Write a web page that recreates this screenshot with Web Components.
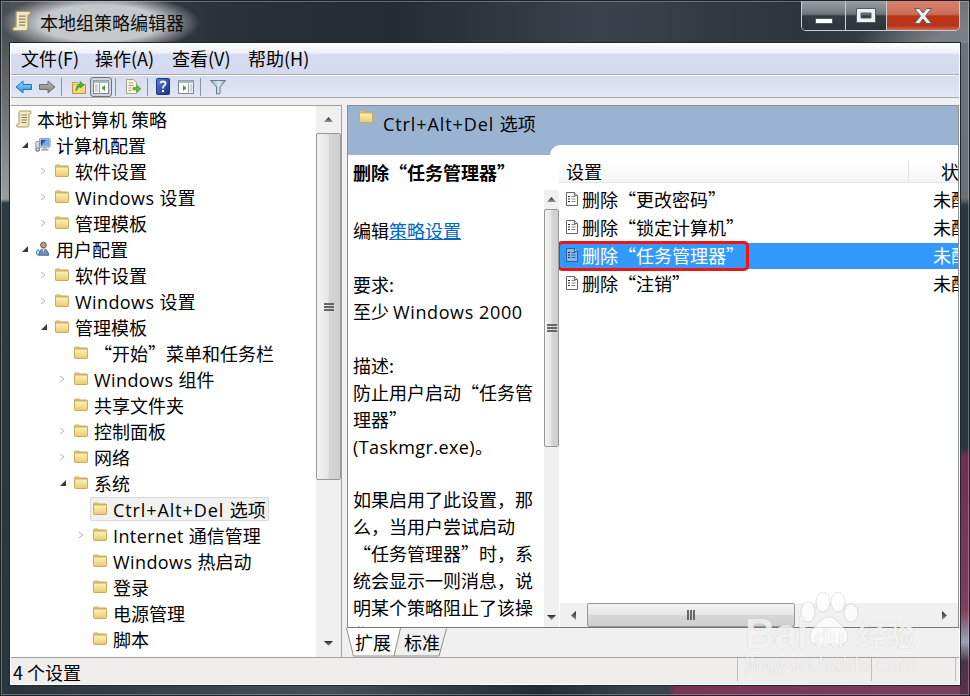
<!DOCTYPE html>
<html lang="zh-CN">
<head>
<meta charset="utf-8">
<title>本地组策略编辑器</title>
<style>
html, body { margin: 0; padding: 0; }
body { font: 18px/26px "Noto Sans CJK SC", "Noto Sans", sans-serif; color: #000; width: 970px; height: 696px; overflow: hidden; }
/* latin runs are wider in the reference than the CJK font's own latin */
.l { font-family: "Open Sans", "Noto Sans", sans-serif; line-height: 1; letter-spacing: .4px; }
.c { letter-spacing: .9px; }
.n { letter-spacing: .6px; }
</style>
</head>
<body>
<win-frame>
  <span slot="title">本地组策略编辑器</span>
  <menu-bar slot="menu"></menu-bar>
  <tool-bar slot="tools"></tool-bar>
  <tree-pane slot="tree">
    <tree-row level="0" icon="scroll">本地计算机 策略</tree-row>
    <tree-row level="1" arrow="open" icon="computer">计算机配置</tree-row>
    <tree-row level="2" arrow="closed" icon="folder">软件设置</tree-row>
    <tree-row level="2" arrow="closed" icon="folder"><span class="l">Windows </span>设置</tree-row>
    <tree-row level="2" arrow="closed" icon="folder">管理模板</tree-row>
    <tree-row level="1" arrow="open" icon="user">用户配置</tree-row>
    <tree-row level="2" arrow="closed" icon="folder">软件设置</tree-row>
    <tree-row level="2" arrow="closed" icon="folder"><span class="l">Windows </span>设置</tree-row>
    <tree-row level="2" arrow="open" icon="folder">管理模板</tree-row>
    <tree-row level="3" icon="folder">“开始”菜单和任务栏</tree-row>
    <tree-row level="3" arrow="closed" icon="folder"><span class="l">Windows </span>组件</tree-row>
    <tree-row level="3" icon="folder">共享文件夹</tree-row>
    <tree-row level="3" arrow="closed" icon="folder">控制面板</tree-row>
    <tree-row level="3" arrow="closed" icon="folder">网络</tree-row>
    <tree-row level="3" arrow="open" icon="folder">系统</tree-row>
    <tree-row level="4" icon="folder" selected><span class="l c">Ctrl+Alt+Del </span>选项</tree-row>
    <tree-row level="4" arrow="closed" icon="folder"><span class="l">Internet </span>通信管理</tree-row>
    <tree-row level="4" icon="folder"><span class="l">Windows </span>热启动</tree-row>
    <tree-row level="4" icon="folder">登录</tree-row>
    <tree-row level="4" icon="folder">电源管理</tree-row>
    <tree-row level="4" icon="folder">脚本</tree-row>
  </tree-pane>
  <detail-pane slot="detail">
    <span slot="heading"><span class="l c">Ctrl+Alt+Del </span>选项</span>
    <desc-pane slot="desc">
      <b slot="title">删除“任务管理器”</b>
      编辑<a href="#">策略设置</a><br><br>
      要求:<br>
      至少 <span class="l n">Windows 2000</span><br><br>
      描述:<br>
      防止用户启动“任务管<br>
      理器”<br>
      <span class="l">(Taskmgr.exe)</span>。<br><br>
      如果启用了此设置，那<br>
      么，当用户尝试启动<br>
      “任务管理器”时，系<br>
      统会显示一则消息，说<br>
      明某个策略阻止了该操<br>
      作。
    </desc-pane>
    <list-pane slot="list">
      <policy-row state="未配置">删除“更改密码”</policy-row>
      <policy-row state="未配置">删除“锁定计算机”</policy-row>
      <policy-row state="未配置" selected>删除“任务管理器”</policy-row>
      <policy-row state="未配置">删除“注销”</policy-row>
    </list-pane>
    <tab-strip slot="tabs"></tab-strip>
  </detail-pane>
  <status-bar slot="status">4 个设置</status-bar>
  <bd-mark slot="mark"></bd-mark>
</win-frame>

<script>
// folder has its own gradient, ids are per shadow root so repeating them is fine
const ICONS = {
  folder: `<svg width="16" height="16" viewBox="0 0 16 16"><defs><linearGradient id="f" x1="0" y1="0" x2="0" y2="1"><stop offset="0" stop-color="#fdf3bd"/><stop offset="1" stop-color="#ecca6c"/></linearGradient></defs>
    <path d="M1.500 4V2.800q0-.8.8-.8h3.400q.6 0 .9.6l.3.4h6.800q.8 0 .8.8V4z" fill="#f2d98c" stroke="#c9a95a"/>
    <rect x="1.500" y="4" width="13" height="9.500" rx=".8" fill="url(#f)" stroke="#cbaa5c"/></svg>`,
  scroll: `<svg width="16" height="20" viewBox="0 0 16 20"><path d="M4 2h10q1.500 0 1 2l-1 1h-1v10q0 3-2 3H2q-2 0-1.500-2l1-1h1.500V4q0-2 1-2z" fill="#f1e7c2" stroke="#a9996c"/><path d="M5.500 6h5.500M5.500 8.500h5.500M5.500 11h5.500M5.500 13.500h5" stroke="#8b8266"/></svg>`,
  computer: `<svg width="18" height="18" viewBox="0 0 18 18"><rect x="5" y="1.500" width="12" height="10" rx="1" fill="#cfd4da" stroke="#8b939c"/><rect x="6.500" y="3" width="9" height="7" fill="#1f53c4"/><path d="M6.500 10l6-7h3v7z" fill="#76a9ec"/><path d="M9 11.500h4v2H9z" fill="#b0b6bc"/><path d="M7 14.500h8" stroke="#8b939c" stroke-width="1.500"/><rect x="1" y="5" width="4" height="11" rx="1" fill="#d8dcdf" stroke="#858c93"/><circle cx="3" cy="14" r="1.800" fill="none" stroke="#3f7fbf"/></svg>`,
  user: `<svg width="18" height="18" viewBox="0 0 18 18"><circle cx="9.500" cy="4.500" r="3.200" fill="#c89a78" stroke="#5a4638"/><path d="M4.500 16q0-7 5-7t6 7z" fill="#6d8fb5" stroke="#415d7b"/><path d="M8.500 9l1 4 1-4z" fill="#eee"/><circle cx="3.500" cy="13" r="2" fill="none" stroke="#3f7fbf" stroke-width="1.200"/><path d="M3.500 9v2M3.500 15v2" stroke="#3f7fbf"/></svg>`,
  policy: `<svg width="14" height="16" viewBox="0 0 14 16"><path d="M1.500 1.500h8l3 3v10h-11z" fill="var(--page,#fff)" stroke="var(--edge,#666)"/><path d="M9.500 1.500v3h3" fill="#ddd" stroke="var(--edge,#666)"/><path d="M3 5.500h2M3 8h2M3 10.500h2" stroke="#222"/><path d="M6.500 5.500h4M6.500 8h4M6.500 10.500h4" stroke="var(--ln,#888)"/></svg>`,
  back: `<svg width="18" height="16" viewBox="0 0 18 16"><defs><linearGradient id="b" x1="0" y1="0" x2="0" y2="1"><stop offset="0" stop-color="#a8defa"/><stop offset="1" stop-color="#1a8adf"/></linearGradient></defs><path d="M1 8l7-6v3.500h8.500v5H8V14z" fill="url(#b)" stroke="#1f74b8"/></svg>`,
  forward: `<svg width="18" height="16" viewBox="0 0 18 16"><defs><linearGradient id="g" x1="0" y1="0" x2="0" y2="1"><stop offset="0" stop-color="#bdbdbd"/><stop offset="1" stop-color="#7c7c7c"/></linearGradient></defs><path d="M17 8l-7-6v3.500H1.500v5H10V14z" fill="url(#g)" stroke="#707070"/></svg>`,
  up: `<svg width="16" height="16" viewBox="0 0 16 16"><path d="M1.500 5.500h13v9h-13z" fill="#f4d67c" stroke="#b9974a"/><path d="M1.500 5.500v-2h5l1 2" fill="#f8e6a5" stroke="#b9974a"/><path d="M5 12q0-6 4-7V2.500L13 6l-4 3V7q-2 1-4 5z" fill="#4db233" stroke="#2f8a1e" stroke-width=".6"/></svg>`,
  pane: `<svg width="16" height="14" viewBox="0 0 16 14"><rect x=".5" y=".5" width="15" height="13" fill="#fff" stroke="#7d868c"/><path d="M.5.500h15v2.500H.5z" fill="#a9b8c4"/><path d="M2 5h3M2 7h3M2 9h3M2 11h3" stroke="#9aa8b2"/><path d="M6.500 3v10.500" stroke="#9aa8b2"/><path d="M12 5v6L8.500 8z" fill="#3aa82c"/></svg>`,
  exportl: `<svg width="18" height="17" viewBox="0 0 18 17"><path d="M2.500 1.500h7l3 3v11h-10z" fill="#fdf8e6" stroke="#a6a18e"/><path d="M4.500 5h5M4.500 7.500h5M4.500 10h3M4.500 12.500h3" stroke="#a69a70"/><path d="M9 9.500h4V7l4 3.800-4 3.700V12H9z" fill="#5cc23e" stroke="#3a9a26" stroke-width=".6"/></svg>`,
  help: `<svg width="14" height="17" viewBox="0 0 14 17"><defs><linearGradient id="h" x1="0" y1="0" x2="1" y2="1"><stop offset="0" stop-color="#5a7fd6"/><stop offset="1" stop-color="#152f8c"/></linearGradient></defs><rect x=".5" y=".5" width="13" height="16" rx="1" fill="url(#h)" stroke="#1d3480"/><path d="M4.500 5.500q0-2 2.500-2t2.500 2q0 1.500-1.500 2.200-1 .6-1 2v.8" fill="none" stroke="#fff" stroke-width="1.800"/><rect x="6" y="12" width="2" height="2" fill="#fff"/></svg>`,
  view: `<svg width="16" height="14" viewBox="0 0 16 14"><rect x=".5" y=".5" width="15" height="13" fill="#fff" stroke="#7d868c"/><path d="M.5.500h15v2.500H.5z" fill="#a9b8c4"/><path d="M10.500 3v10.500" stroke="#9aa8b2"/><path d="M12 5h2.500M12 7h2.500M12 9h2.500M12 11h2.500" stroke="#9aa8b2"/><path d="M5 5v6l3.500-3z" fill="#3aa82c"/></svg>`,
  filter: `<svg width="16" height="16" viewBox="0 0 16 16"><defs><linearGradient id="t" x1="0" y1="0" x2="1" y2="0"><stop offset="0" stop-color="#8fb0c4"/><stop offset=".6" stop-color="#dfe9ef"/><stop offset="1" stop-color="#7e99ac"/></linearGradient></defs><path d="M.5 1.500h15L10 8v6.500L6.500 15V8z" fill="url(#t)" stroke="#5f7b8e"/></svg>`
};

class WinFrame extends HTMLElement {
  connectedCallback() {
    this.attachShadow({ mode: 'open' }).innerHTML = `
      <style>
        :host {
          display: flex; flex-direction: column; position: relative;
          width: 970px; height: 696px; box-sizing: border-box; padding: 0 10px 11px;
          background:
            radial-gradient(ellipse 100px 30px at 100px 23px, rgba(208,211,214,.92) 0 60%, rgba(208,211,214,0) 100%) 0 0/400px 43px no-repeat,
            radial-gradient(ellipse 120px 45px at 975px 45px, #7b8086 0 35%, rgba(123,128,134,0) 100%) 0 0/100% 43px no-repeat,
            linear-gradient(180deg, #6d7379 30px, #6a7076 198px, #283640 206px, #283640 448px, #6e2f4c 456px, #7d3f5c 610px, #9aa2bb 642px, #51304a 662px, #5c2f48 696px) 100% 0/10px 100% no-repeat,
            linear-gradient(180deg, #4a4f54 30px, #9a9da0 199px, #2d3a44 203px, #2a363f 696px) 0 0/10px 100% no-repeat,
            linear-gradient(90deg, #2a333b 0, #454f56 330px, #222c34 540px, #3a444b 640px, #3a444b 668px, #7a3452 676px, #7d3f5c 960px) 0 100%/100% 11px no-repeat,
            linear-gradient(90deg, #4e5459 0, #2a2f38 230px, #252c35 400px, #3a424d 600px, #2c343d 800px, #3e464d 960px);
          box-shadow: inset 0 0 0 1px #1d2329, inset 0 0 0 2px rgba(255,255,255,.28);
          overflow: hidden;
        }
        .title { height: 43px; flex: none; display: flex; align-items: flex-start; position: relative; }
        .title > svg { margin: 9px 0 0 2px; }
        .title .txt { margin: 9px 0 0 8px; font-size: 18px; line-height: 26px; color: #0c0c0c; }
        .caps { position: absolute; top: 1px; right: 0; display: flex; height: 29px; width: 157px; border: 1px solid #c9ced2; border-top: 0; border-radius: 0 0 5px 5px; overflow: hidden; box-sizing: content-box; }
        .caps div { display: flex; align-items: center; justify-content: center; border-right: 1px solid #c9ced2; background: linear-gradient(#9ba0a4 0, #70767b 45%, #343b42 52%, #2c343b 100%); }
        .caps .min { width: 43px; } .caps .min svg { margin-top: 10px; }
        .caps .max { width: 40px; }
        .caps .close { flex: 1; border: 0; background: linear-gradient(#d9806f 0, #cb6f5c 45%, #bc3518 52%, #b9341a 85%, #cf6a50 100%); }
        .client { flex: 1; display: flex; flex-direction: column; min-height: 0; border: 1px solid #fff; outline: 1px solid #20262b; background: #f0f0f0; }
        .main { flex: 1; display: flex; gap: 5px; padding-top: 7px; min-height: 0; }
      </style>
      <div class="title">
        ${ICONS.scroll.replace('width="16" height="20"', 'width="20" height="24"')}
        <span class="txt"><slot name="title"></slot></span>
        <div class="caps">
          <div class="min"><svg width="18" height="6"><rect x=".5" y=".5" width="17" height="5" fill="#fff" stroke="#555b60"/></svg></div>
          <div class="max"><svg width="20" height="15"><path fill-rule="evenodd" d="M.5.500h19v14H.5zM5 5v5h10V5z" fill="#eef0f1" stroke="#555b60"/></svg></div>
          <div class="close"><svg width="18" height="16" viewBox="0 0 18 16"><path d="M.5.500h5L9 5l3.500-4.500h5L11.500 8l6 7.500h-5L9 11l-3.500 4.500h-5l6-7.500z" fill="#eceeef" stroke="#5b5f63"/></svg></div>
        </div>
      </div>
      <div class="client">
        <slot name="menu"></slot>
        <slot name="tools"></slot>
        <div class="main"><slot name="tree"></slot><slot name="detail"></slot></div>
        <slot name="status"></slot>
      </div>
      <slot name="mark"></slot>`;
  }
}

class MenuBar extends HTMLElement {
  connectedCallback() {
    this.attachShadow({ mode: 'open' }).innerHTML = `
      <style>
        :host { display: grid; grid-template-columns: 74px 77px 76px auto; height: 30px; padding-left: 10px; line-height: 29px; box-sizing: content-box;
          background: linear-gradient(#fbfcfe 0, #eef0f8 30%, #d6dbef 36%, #d5daee 100%); border-bottom: 1px solid #a9a9a9; }
      </style>
      <span>文件(F)</span><span>操作(A)</span><span>查看(V)</span><span>帮助(H)</span>`;
  }
}

class ToolBar extends HTMLElement {
  connectedCallback() {
    const item = (name, ml) => `<span class="i" style="margin-left:${ml}px">${ICONS[name]}</span>`;
    this.attachShadow({ mode: 'open' }).innerHTML = `
      <style>
        :host { display: flex; align-items: center; border-bottom: 1px solid #aaa; border-top: 1px solid #fff; box-sizing: border-box; height: 23px;
          background: linear-gradient(#d6dbef, #e2e6f5); }
        .i { display: flex; flex: none; }
        .sep { flex: none; width: 1px; height: 18px; background: #8e949c; }
        .press { display: flex; flex: none; align-items: center; justify-content: center; width: 22px; height: 20px; box-sizing: border-box; border: 1px solid #6f757b; border-radius: 3px; background: #cfd3df; margin-left: 3px; }
      </style>
      ${item('back', 4)}${item('forward', 5)}
      <span class="sep" style="margin-left:5px"></span>
      ${item('up', 9)}
      <span class="press">${ICONS.pane}</span>
      <span class="sep" style="margin-left:3px"></span>
      ${item('exportl', 8)}
      <span class="sep" style="margin-left:5px"></span>
      ${item('help', 8)}${item('view', 8)}
      <span class="sep" style="margin-left:6px"></span>
      ${item('filter', 9)}`;
  }
}

class ScrollBar extends HTMLElement {
  connectedCallback() {
    const h = this.getAttribute('orient') === 'h';
    const btn = +this.getAttribute('btn');
    const start = +this.getAttribute('start');
    const size = +this.getAttribute('size');
    const arrow = (d) => `<svg width="11" height="11" viewBox="0 0 11 11"><path d="${d}" fill="url(#a)"/></svg>`;
    this.attachShadow({ mode: 'open' }).innerHTML = `
      <style>
        :host { display: flex; flex: none; flex-direction: ${h ? 'row' : 'column'}; background: #f0f0f0; box-sizing: border-box; }
        .btn { flex: none; display: flex; align-items: center; justify-content: center; ${h ? 'width' : 'height'}: ${btn}px; }
        .gap { flex: none; ${h ? 'width' : 'height'}: ${start}px; }
        .thumb { flex: none; ${h ? 'width' : 'height'}: ${size}px; box-sizing: border-box; border: 1px solid #979797; border-radius: 2px;
          display: flex; align-items: center; justify-content: center; gap: 1px; flex-direction: ${h ? 'row' : 'column'};
          background: linear-gradient(${h ? '180deg' : '90deg'}, #f3f3f3 0, #e6e6e6 48%, #d6d6d6 52%, #cfcfcf 100%); }
        .thumb i { display: block; background: #666; ${h ? 'width: 2px; height: 10px;' : 'width: 10px; height: 2px;'} }
        .rest { flex: 1; }
      </style>
      <svg width="0" height="0" style="position:absolute"><defs><linearGradient id="a" x1="0" y1="0" x2="0" y2="1"><stop offset="0" stop-color="#222"/><stop offset="1" stop-color="#999"/></linearGradient></defs></svg>
      <span class="btn">${arrow(h ? 'M8 1v9L3 5.500z' : 'M5.500 3L10 8H1z')}</span>
      <span class="gap"></span>
      <div class="thumb"><i></i><i></i><i></i></div>
      <span class="rest"></span>
      <span class="btn">${arrow(h ? 'M3 1v9l5-4.500z' : 'M1 3h9L5.500 8z')}</span>`;
  }
}

class TreePane extends HTMLElement {
  connectedCallback() {
    this.attachShadow({ mode: 'open' }).innerHTML = `
      <style>
        :host { display: flex; flex: none; width: 331px; height: 100%; box-sizing: border-box; background: #fff; border-top: 1px solid #a0a0a0; border-right: 1px solid #a0a0a0; }
        .rows { width: 305px; flex: none; overflow: hidden; }
        scroll-bar { width: 25px; }
      </style>
      <div class="rows"><slot></slot></div>
      <scroll-bar btn="27" start="0" size="347"></scroll-bar>`;
  }
}

class TreeRow extends HTMLElement {
  connectedCallback() {
    const level = +this.getAttribute('level');
    const pad = level ? (level - 1) * 19 + 6 : 5;
    const a = this.getAttribute('arrow');
    const arrow = a === 'open'
      ? '<svg width="14" height="14"><path d="M11 4v6H5z" fill="#3a3a3a"/></svg>'
      : a === 'closed' ? '<svg width="14" height="14"><path d="M5 4l4 3-4 3" fill="none" stroke="#b5b5b5"/></svg>' : '';
    const box = level ? `<span class="a">${arrow}</span><span style="width:4px;flex:none"></span>` : '';
    this.attachShadow({ mode: 'open' }).innerHTML = `
      <style>
        :host { display: flex; align-items: center; height: 26px; padding-left: ${pad}px; white-space: pre; line-height: 24px; }
        .a { width: 14px; flex: none; display: flex; align-items: center; justify-content: center; }
        .lbl { display: flex; align-items: center; height: 24px; gap: 5px; }
        .ic { width: 16px; display: flex; justify-content: center; flex: none; }
        .tx { display: block; }
        :host([selected]) .lbl { background: #f1f1f1; box-shadow: inset 0 0 0 1px #d9d9d9; border-radius: 2px; margin-left: -2px; padding: 0 3px 0 2px; }
      </style>
      ${box}<span class="lbl"><span class="ic">${ICONS[this.getAttribute('icon')]}</span><span class="tx"><slot></slot></span></span>`;
  }
}

class DetailPane extends HTMLElement {
  connectedCallback() {
    this.attachShadow({ mode: 'open' }).innerHTML = `
      <style>
        :host { display: flex; flex-direction: column; flex: 1; min-width: 0; height: 100%; }
        .box { flex: 1; min-height: 0; display: flex; flex-direction: column; background: #99b3d1; border: 1px solid #8a8f95; border-bottom-color: #777; }
        .head { flex: none; height: 39px; display: flex; align-items: flex-start; padding-left: 10px; box-sizing: border-box; }
        .head svg { margin-top: 3px; }
        .head span.t { margin-left: 9px; margin-top: 4px; white-space: pre; }
        .body { flex: 1; min-height: 0; display: flex; }
        ::slotted([slot=desc]) { margin-top: 10px; }
      </style>
      <div class="box">
        <div class="head">${ICONS.folder}<span class="t"><slot name="heading"></slot></span></div>
        <div class="body"><slot name="desc"></slot><slot name="list"></slot></div>
      </div>
      <slot name="tabs"></slot>`;
  }
}

class DescPane extends HTMLElement {
  connectedCallback() {
    this.attachShadow({ mode: 'open' }).innerHTML = `
      <style>
        :host { display: flex; flex: none; width: 211px; background: #fff; position: relative; z-index: 1; box-sizing: border-box; line-height: 26.93px; min-height: 0; }
        .txt { width: 196px; flex: none; padding-left: 5px; box-sizing: border-box; white-space: nowrap; overflow: hidden; }
        .hd { height: 62px; padding-top: 4px; box-sizing: border-box; }
        ::slotted(a) { color: #0066cc; }
        scroll-bar { width: 15px; margin-top: 35px; }
      </style>
      <div class="txt"><div class="hd"><slot name="title"></slot></div><slot></slot></div>
      <scroll-bar btn="19" start="0" size="238"></scroll-bar>`;
  }
}

class ListPane extends HTMLElement {
  connectedCallback() {
    this.attachShadow({ mode: 'open' }).innerHTML = `
      <style>
        :host { display: flex; flex-direction: column; flex: 1; min-width: 0; margin-left: -9px; padding: 15px 0 0 9px; background: #fff; border-radius: 10px 0 0 0; position: relative; }
        .hdr { flex: none; height: 23px; display: flex; background: linear-gradient(#fff, #f5f5f5); border-bottom: 1px solid #e5e5e5; box-sizing: border-box; line-height: 23px; white-space: nowrap; overflow: hidden; }
        .hdr span:first-child { width: 350px; padding-left: 7px; box-sizing: border-box; border-right: 1px solid #e3e3e3; flex: none; }
        .hdr span:last-child { padding-left: 32px; }
        .rows { flex: 1; padding-top: 3px; }
        scroll-bar { height: 24px; margin-left: 1px; }
      </style>
      <div class="hdr"><span>设置</span><span>状态</span></div>
      <div class="rows"><slot></slot></div>
      <scroll-bar orient="h" btn="27" start="0" size="208"></scroll-bar>`;
  }
}

class PolicyRow extends HTMLElement {
  connectedCallback() {
    const sel = this.hasAttribute('selected');
    this.attachShadow({ mode: 'open' }).innerHTML = `
      <style>
        :host { display: grid; grid-template-columns: 375px 25px; align-items: center; height: 28px; margin-left: -1px; position: relative; white-space: nowrap; line-height: 26px; }
        :host([selected]) { background: linear-gradient(#3399ff, #3399ff) 0 1px/100% 26px no-repeat; color: #fff; --page: #8ab8ea; --edge: #2a5f9e; --ln: #2a5f9e; }
        .name { display: flex; align-items: center; gap: 3px; padding: 0 0 2px 7px; }
        .state { overflow: hidden; padding-bottom: 2px; }
        .mark { position: absolute; left: -1px; top: -1px; width: 192px; height: 30px; box-sizing: border-box; border: 3px solid #f01414; border-radius: 5px; }
      </style>
      <span class="name">${ICONS.policy}<slot></slot></span>
      <span class="state">${this.getAttribute('state')}</span>
      ${sel ? '<span class="mark"></span>' : ''}`;
  }
}

class TabStrip extends HTMLElement {
  connectedCallback() {
    this.attachShadow({ mode: 'open' }).innerHTML = `
      <style>
        :host { display: block; flex: none; height: 29px; position: relative; }
        svg { position: absolute; left: -1px; top: 0; }
        .t { position: relative; display: flex; gap: 13px; padding-left: 8px; line-height: 29px; }
      </style>
      <svg width="105" height="29" viewBox="0 0 105 29">
        <path d="M53.500 .5L47 28H93L100.500 .5" fill="#f0f0f0" stroke="#8c8c8c"/>
        <path d="M.5 0L7.500 28H48L54.500 0" fill="#fff" stroke="#8c8c8c"/>
      </svg>
      <div class="t"><span>扩展</span><span>标准</span></div>`;
  }
}

class StatusBar extends HTMLElement {
  connectedCallback() {
    this.attachShadow({ mode: 'open' }).innerHTML = `
      <style>
        :host { display: flex; flex: none; height: 27px; box-sizing: border-box; border-top: 1px solid #a0a0a0; background: #f0eded; }
        div { box-sizing: border-box; border-right: 1px solid #c0bebe; margin-bottom: 3px; flex: none; line-height: 29px; white-space: nowrap; }
      </style>
      <div style="width:727px;padding-left:2px"><slot></slot></div>
      <div style="width:134px"></div>
      <div style="width:84px"></div>`;
  }
}

class BdMark extends HTMLElement {
  connectedCallback() {
    this.attachShadow({ mode: 'open' }).innerHTML = `
      <style>
        :host { position: absolute; left: 745px; top: 590px; width: 175px; height: 84px; color: rgba(255,255,255,.8); pointer-events: none; }
        span, svg { position: absolute; white-space: nowrap; }
        span { text-shadow: 0 0 1px rgba(0,0,0,.2); }
        .bai { left: 0; top: 23px; font: bold 42px/42px "Liberation Sans", sans-serif; letter-spacing: -1px; }
        .du { left: 69px; top: 35px; font: bold 25px/26px "Liberation Sans", sans-serif; color: rgba(255,255,255,.85); }
        .jy { left: 112px; top: 28px; font: 600 29px/32px "Noto Sans CJK SC", sans-serif; }
        .url { left: 0; top: 63px; font: 20.500px/22px "Liberation Sans", sans-serif; letter-spacing: .4px; }
      </style>
      <svg style="left:54px;top:2px" width="62" height="60" viewBox="0 0 62 60" fill="rgba(255,255,255,.72)" stroke="rgba(0,0,0,.1)">
        <ellipse cx="9" cy="20" rx="7" ry="10"/><ellipse cx="24" cy="10" rx="7" ry="10"/><ellipse cx="39" cy="10" rx="7" ry="10"/><ellipse cx="52" cy="21" rx="7" ry="9"/>
        <path d="M30 25c7 0 10 7 15 11 6 5 5 16-3 17-5 1-8-1-12-1s-7 2-12 1c-8-1-9-11-4-17 5-4 9-11 16-11z"/>
      </svg>
      <span class="bai">Bai</span>
      <span class="du">du</span>
      <span class="jy">经验</span>
      <span class="url">jingyan.baidu.com</span>`;
  }
}

customElements.define('scroll-bar', ScrollBar);
customElements.define('win-frame', WinFrame);
customElements.define('menu-bar', MenuBar);
customElements.define('tool-bar', ToolBar);
customElements.define('tree-pane', TreePane);
customElements.define('tree-row', TreeRow);
customElements.define('detail-pane', DetailPane);
customElements.define('desc-pane', DescPane);
customElements.define('list-pane', ListPane);
customElements.define('policy-row', PolicyRow);
customElements.define('tab-strip', TabStrip);
customElements.define('status-bar', StatusBar);
customElements.define('bd-mark', BdMark);
</script>
</body>
</html>
